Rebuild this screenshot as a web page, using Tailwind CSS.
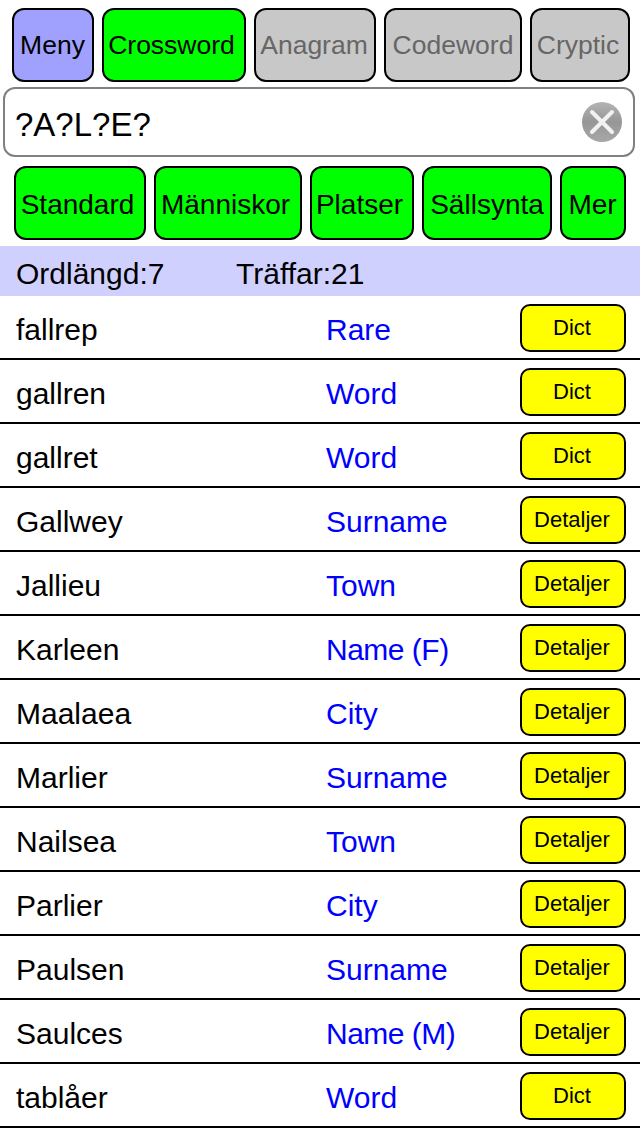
<!DOCTYPE html>
<html lang="en">
<head>
    <meta charset="UTF-8">
    <meta name="viewport" content="width=device-width, initial-scale=1.0">
    <title>Crossword</title>
    <script src="https://cdn.jsdelivr.net/npm/@tailwindcss/browser@4"></script>
</head>
<body class="bg-white w-[640px] h-[1136px] overflow-hidden font-['Liberation_Sans',Arial,sans-serif] text-black">
    <!-- mode buttons -->
    <div class="flex pl-3 pt-2 gap-2 h-[82px]">
        <button class="w-[82px] h-[74px] pt-[2px] pr-px rounded-xl border-2 border-black bg-[#a0a0ff] text-[26.5px] whitespace-nowrap">Meny</button>
        <button class="w-[144px] h-[74px] pt-[2px] pr-[5px] rounded-xl border-2 border-black bg-[#00ff00] text-[26.5px] whitespace-nowrap">Crossword</button>
        <button class="w-[122px] h-[74px] pt-[2px] pr-[2px] rounded-xl border-2 border-black bg-[#c8c8c8] text-[#666666] text-[26.5px] whitespace-nowrap">Anagram</button>
        <button class="w-[138px] h-[74px] pt-[2px] rounded-xl border-2 border-black bg-[#c8c8c8] text-[#666666] text-[26.5px] whitespace-nowrap">Codeword</button>
        <button class="w-[100px] h-[74px] pt-[2px] pr-1 rounded-xl border-2 border-black bg-[#c8c8c8] text-[#666666] text-[26.5px] whitespace-nowrap">Cryptic</button>
    </div>

    <!-- search field -->
    <div class="mt-[5px] ml-[3px] w-[632px] h-[70px] rounded-xl border-2 border-[#808080] flex items-center justify-between pl-[10px] pr-[11px]">
        <span class="text-[33px] leading-none pt-1">?A?L?E?</span>
        <svg class="w-10 h-10" viewBox="0 0 40 40">
            <defs>
                <linearGradient id="clear" x1="0" y1="0" x2="0" y2="1">
                    <stop offset="0" stop-color="#b4b4b4"></stop>
                    <stop offset="0.5" stop-color="#969696"></stop>
                    <stop offset="1" stop-color="#a8a8a8"></stop>
                </linearGradient>
            </defs>
            <circle cx="20" cy="20" r="20" fill="url(#clear)"></circle>
            <path d="M10 10L30 30M30 10L10 30" stroke="#f2f2f2" stroke-width="4" stroke-linecap="round"></path>
        </svg>
    </div>

    <!-- category buttons -->
    <div class="flex pl-[14px] mt-[9px] gap-2 h-[74px]">
        <button class="w-[132px] h-[74px] pt-1 pr-[5px] rounded-xl border-2 border-black bg-[#00ff00] text-[28px] whitespace-nowrap">Standard</button>
        <button class="w-[148px] h-[74px] pt-1 pr-[5px] rounded-xl border-2 border-black bg-[#00ff00] text-[28px] whitespace-nowrap">Människor</button>
        <button class="w-[104px] h-[74px] pt-1 pr-[5px] rounded-xl border-2 border-black bg-[#00ff00] text-[28px] whitespace-nowrap">Platser</button>
        <button class="w-[130px] h-[74px] pt-1 rounded-xl border-2 border-black bg-[#00ff00] text-[28px] whitespace-nowrap">Sällsynta</button>
        <button class="w-[66px] h-[74px] pt-1 pr-px rounded-xl border-2 border-black bg-[#00ff00] text-[28px] whitespace-nowrap">Mer</button>
    </div>

    <!-- counts -->
    <div class="mt-[6px] h-[50px] bg-[#d0d0ff] flex items-center pl-4 pt-1 text-[30px]">
        <span class="w-[220px]">Ordlängd:7</span>
        <span>Träffar:21</span>
    </div>

    <!-- results -->
    <div id="rows">
        <div class="h-16 border-b-2 border-black flex items-center"><span class="w-[310px] pl-4 pt-1 text-[30px]">fallrep</span><span class="w-[210px] pl-4 pt-1 text-[30px] text-[#0000ff]">Rare</span><button class="w-[106px] h-12 mt-[2px] pb-[2px] pr-[2px] rounded-[10px] border-2 border-black bg-[#ffff00] text-[22px]">Dict</button></div>
        <div class="h-16 border-b-2 border-black flex items-center"><span class="w-[310px] pl-4 pt-1 text-[30px]">gallren</span><span class="w-[210px] pl-4 pt-1 text-[30px] text-[#0000ff]">Word</span><button class="w-[106px] h-12 mt-[2px] pb-[2px] pr-[2px] rounded-[10px] border-2 border-black bg-[#ffff00] text-[22px]">Dict</button></div>
        <div class="h-16 border-b-2 border-black flex items-center"><span class="w-[310px] pl-4 pt-1 text-[30px]">gallret</span><span class="w-[210px] pl-4 pt-1 text-[30px] text-[#0000ff]">Word</span><button class="w-[106px] h-12 mt-[2px] pb-[2px] pr-[2px] rounded-[10px] border-2 border-black bg-[#ffff00] text-[22px]">Dict</button></div>
        <div class="h-16 border-b-2 border-black flex items-center"><span class="w-[310px] pl-4 pt-1 text-[30px]">Gallwey</span><span class="w-[210px] pl-4 pt-1 text-[30px] text-[#0000ff]">Surname</span><button class="w-[106px] h-12 mt-[2px] pb-[2px] pr-[2px] rounded-[10px] border-2 border-black bg-[#ffff00] text-[22px]">Detaljer</button></div>
        <div class="h-16 border-b-2 border-black flex items-center"><span class="w-[310px] pl-4 pt-1 text-[30px]">Jallieu</span><span class="w-[210px] pl-4 pt-1 text-[30px] text-[#0000ff]">Town</span><button class="w-[106px] h-12 mt-[2px] pb-[2px] pr-[2px] rounded-[10px] border-2 border-black bg-[#ffff00] text-[22px]">Detaljer</button></div>
        <div class="h-16 border-b-2 border-black flex items-center"><span class="w-[310px] pl-4 pt-1 text-[30px]">Karleen</span><span class="w-[210px] pl-4 pt-1 text-[30px] tracking-[-0.5px] text-[#0000ff]">Name (F)</span><button class="w-[106px] h-12 mt-[2px] pb-[2px] pr-[2px] rounded-[10px] border-2 border-black bg-[#ffff00] text-[22px]">Detaljer</button></div>
        <div class="h-16 border-b-2 border-black flex items-center"><span class="w-[310px] pl-4 pt-1 text-[30px]">Maalaea</span><span class="w-[210px] pl-4 pt-1 text-[30px] text-[#0000ff]">City</span><button class="w-[106px] h-12 mt-[2px] pb-[2px] pr-[2px] rounded-[10px] border-2 border-black bg-[#ffff00] text-[22px]">Detaljer</button></div>
        <div class="h-16 border-b-2 border-black flex items-center"><span class="w-[310px] pl-4 pt-1 text-[30px]">Marlier</span><span class="w-[210px] pl-4 pt-1 text-[30px] text-[#0000ff]">Surname</span><button class="w-[106px] h-12 mt-[2px] pb-[2px] pr-[2px] rounded-[10px] border-2 border-black bg-[#ffff00] text-[22px]">Detaljer</button></div>
        <div class="h-16 border-b-2 border-black flex items-center"><span class="w-[310px] pl-4 pt-1 text-[30px]">Nailsea</span><span class="w-[210px] pl-4 pt-1 text-[30px] text-[#0000ff]">Town</span><button class="w-[106px] h-12 mt-[2px] pb-[2px] pr-[2px] rounded-[10px] border-2 border-black bg-[#ffff00] text-[22px]">Detaljer</button></div>
        <div class="h-16 border-b-2 border-black flex items-center"><span class="w-[310px] pl-4 pt-1 text-[30px]">Parlier</span><span class="w-[210px] pl-4 pt-1 text-[30px] text-[#0000ff]">City</span><button class="w-[106px] h-12 mt-[2px] pb-[2px] pr-[2px] rounded-[10px] border-2 border-black bg-[#ffff00] text-[22px]">Detaljer</button></div>
        <div class="h-16 border-b-2 border-black flex items-center"><span class="w-[310px] pl-4 pt-1 text-[30px]">Paulsen</span><span class="w-[210px] pl-4 pt-1 text-[30px] text-[#0000ff]">Surname</span><button class="w-[106px] h-12 mt-[2px] pb-[2px] pr-[2px] rounded-[10px] border-2 border-black bg-[#ffff00] text-[22px]">Detaljer</button></div>
        <div class="h-16 border-b-2 border-black flex items-center"><span class="w-[310px] pl-4 pt-1 text-[30px]">Saulces</span><span class="w-[210px] pl-4 pt-1 text-[30px] tracking-[-0.5px] text-[#0000ff]">Name (M)</span><button class="w-[106px] h-12 mt-[2px] pb-[2px] pr-[2px] rounded-[10px] border-2 border-black bg-[#ffff00] text-[22px]">Detaljer</button></div>
        <div class="h-16 border-b-2 border-black flex items-center"><span class="w-[310px] pl-4 pt-1 text-[30px]">tablåer</span><span class="w-[210px] pl-4 pt-1 text-[30px] text-[#0000ff]">Word</span><button class="w-[106px] h-12 mt-[2px] pb-[2px] pr-[2px] rounded-[10px] border-2 border-black bg-[#ffff00] text-[22px]">Dict</button></div>
    </div>
</body>
</html>
